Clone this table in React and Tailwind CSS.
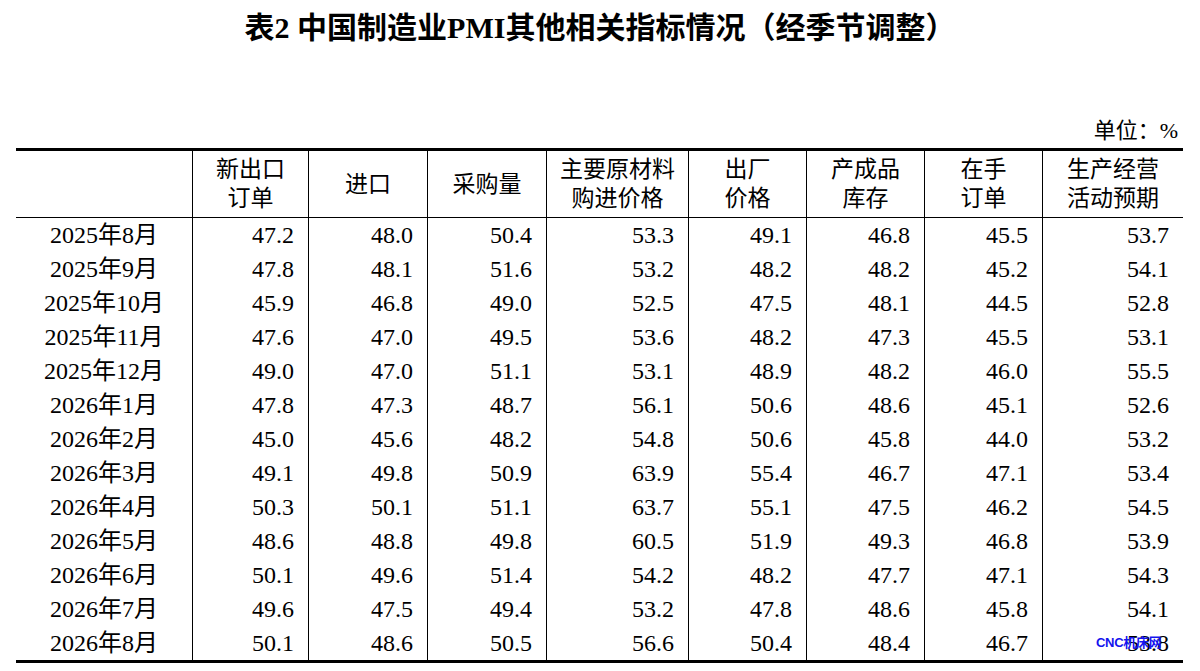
import React from 'react'

const headers = [
  ['新出口', '订单'],
  ['进口'],
  ['采购量'],
  ['主要原材料', '购进价格'],
  ['出厂', '价格'],
  ['产成品', '库存'],
  ['在手', '订单'],
  ['生产经营', '活动预期'],
]

const rows = [
  ['2025年8月', '47.2', '48.0', '50.4', '53.3', '49.1', '46.8', '45.5', '53.7'],
  ['2025年9月', '47.8', '48.1', '51.6', '53.2', '48.2', '48.2', '45.2', '54.1'],
  ['2025年10月', '45.9', '46.8', '49.0', '52.5', '47.5', '48.1', '44.5', '52.8'],
  ['2025年11月', '47.6', '47.0', '49.5', '53.6', '48.2', '47.3', '45.5', '53.1'],
  ['2025年12月', '49.0', '47.0', '51.1', '53.1', '48.9', '48.2', '46.0', '55.5'],
  ['2026年1月', '47.8', '47.3', '48.7', '56.1', '50.6', '48.6', '45.1', '52.6'],
  ['2026年2月', '45.0', '45.6', '48.2', '54.8', '50.6', '45.8', '44.0', '53.2'],
  ['2026年3月', '49.1', '49.8', '50.9', '63.9', '55.4', '46.7', '47.1', '53.4'],
  ['2026年4月', '50.3', '50.1', '51.1', '63.7', '55.1', '47.5', '46.2', '54.5'],
  ['2026年5月', '48.6', '48.8', '49.8', '60.5', '51.9', '49.3', '46.8', '53.9'],
  ['2026年6月', '50.1', '49.6', '51.4', '54.2', '48.2', '47.7', '47.1', '54.3'],
  ['2026年7月', '49.6', '47.5', '49.4', '53.2', '47.8', '48.6', '45.8', '54.1'],
  ['2026年8月', '50.1', '48.6', '50.5', '56.6', '50.4', '48.4', '46.7', '53.8'],
]

const serif = { fontFamily: '"Liberation Serif", "Noto Sans CJK SC", serif' }

function App() {
  return (
    <div className="w-[1200px] h-[671px] bg-white text-black overflow-hidden" style={serif}>
      <div className="h-[54px] flex items-center justify-center text-[30px] font-bold">
        表2 中国制造业PMI其他相关指标情况（经季节调整）
      </div>

      <div className="mt-[63px] h-[28px] flex items-center justify-end pr-[22px] text-[22px] leading-none">
        单位：%
      </div>

      <div className="mt-[3px] ml-[16px] w-[1167px] border-t-[3px] border-b-[3px] border-black">
        <div className="grid grid-cols-[176px_116px_119px_119px_142px_118px_118px_118px_141px] border-b-[1.5px] border-black">
          <div className="h-[66px]"></div>
          {headers.map((h, i) => (
            <div key={i} className="h-[66px] border-l-[1.5px] border-black flex flex-col items-center justify-center text-[23px] leading-[29px]">
              {h.map((line) => <span key={line}>{line}</span>)}
            </div>
          ))}
        </div>

        {rows.map((r, ri) => (
          <div key={ri} className="grid grid-cols-[176px_116px_119px_119px_142px_118px_118px_118px_141px]">
            <div className="h-[34px] flex items-center justify-center text-[24px] leading-none">{r[0]}</div>
            {r.slice(1).map((v, ci) => (
              <div key={ci} className="relative h-[34px] border-l-[1.5px] border-black flex items-center justify-end pr-[14px] text-[24px] leading-none">
                {v}
                {ri === rows.length - 1 && ci === 7 && (
                  <span
                    className="absolute left-[53px] top-[10px] text-[13px] font-bold leading-none tracking-[-0.3px] text-[#1414ee] whitespace-nowrap"
                    style={{ fontFamily: '"Liberation Sans", "Noto Sans CJK SC", sans-serif' }}
                  >
                    CNC机床网
                  </span>
                )}
              </div>
            ))}
          </div>
        ))}
      </div>
    </div>
  )
}

export default App
